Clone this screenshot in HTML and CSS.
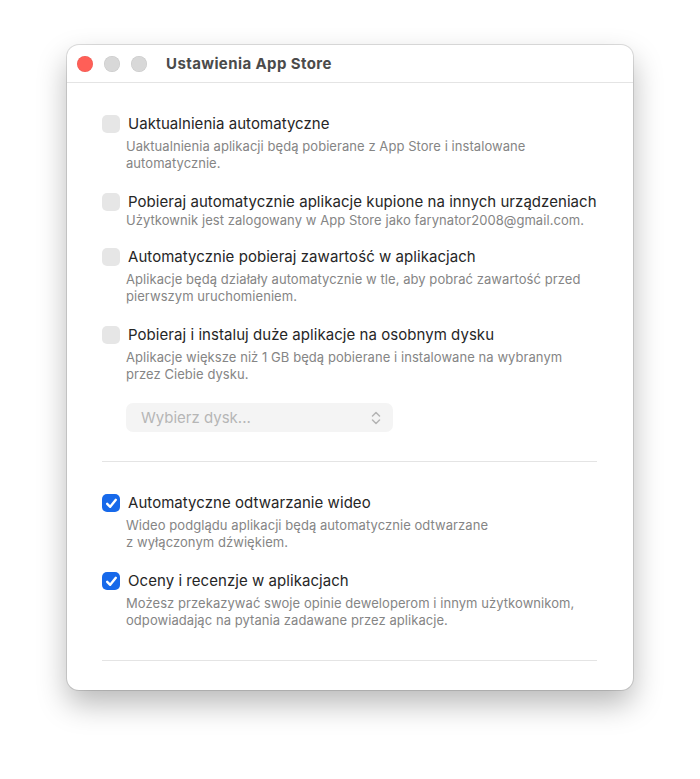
FILE: index.html
```html
<!DOCTYPE html>
<html lang="pl">
<head>
  <meta charset="UTF-8" />
  <title>Ustawienia App Store</title>
  <link rel="stylesheet" href="styles.css">
</head>
<body>

  <div class="window">
    <!-- Title bar -->
    <div class="titlebar">
      <div class="lights">
        <span class="light red"></span>
        <span class="light"></span>
        <span class="light"></span>
      </div>
      <div class="title">Ustawienia App Store</div>
    </div>

    <div class="content">
      <div class="group">
        <div class="option">
          <span class="box"></span>
          <div class="text">
            <div class="label">Uaktualnienia automatyczne</div>
            <div class="desc">Uaktualnienia aplikacji będą pobierane z App Store i instalowane<br>automatycznie.</div>
          </div>
        </div>

        <div class="option tight">
          <span class="box"></span>
          <div class="text">
            <div class="label">Pobieraj automatycznie aplikacje kupione na innych urządzeniach</div>
            <div class="desc">Użytkownik jest zalogowany w App Store jako farynator2008@gmail.com.</div>
          </div>
        </div>

        <div class="option">
          <span class="box"></span>
          <div class="text">
            <div class="label">Automatycznie pobieraj zawartość w aplikacjach</div>
            <div class="desc">Aplikacje będą działały automatycznie w tle, aby pobrać zawartość przed<br>pierwszym uruchomieniem.</div>
          </div>
        </div>

        <div class="option">
          <span class="box"></span>
          <div class="text">
            <div class="label">Pobieraj i instaluj duże aplikacje na osobnym dysku</div>
            <div class="desc">Aplikacje większe niż 1 GB będą pobierane i instalowane na wybranym<br>przez Ciebie dysku.</div>
            <div class="select">
              <span>Wybierz dysk...</span>
              <svg width="10" height="14" viewBox="0 0 10 14">
                <path d="M1.5 5 L5 1.5 L8.5 5 M1.5 9 L5 12.5 L8.5 9" fill="none" stroke="#b4b4b4" stroke-width="1.5" stroke-linecap="round" stroke-linejoin="round"/>
              </svg>
            </div>
          </div>
        </div>
      </div>

      <div class="divider"></div>

      <div class="group">
        <div class="option">
          <span class="box checked">
            <svg width="13" height="13" viewBox="0 0 12 12">
              <path d="M2 6.3 L4.8 9.1 L10 2.6" fill="none" stroke="#fff" stroke-width="2.2" stroke-linecap="round" stroke-linejoin="round"/>
            </svg>
          </span>
          <div class="text">
            <div class="label">Automatyczne odtwarzanie wideo</div>
            <div class="desc">Wideo podglądu aplikacji będą automatycznie odtwarzane<br>z wyłączonym dźwiękiem.</div>
          </div>
        </div>

        <div class="option">
          <span class="box checked">
            <svg width="13" height="13" viewBox="0 0 12 12">
              <path d="M2 6.3 L4.8 9.1 L10 2.6" fill="none" stroke="#fff" stroke-width="2.2" stroke-linecap="round" stroke-linejoin="round"/>
            </svg>
          </span>
          <div class="text">
            <div class="label">Oceny i recenzje w aplikacjach</div>
            <div class="desc">Możesz przekazywać swoje opinie deweloperom i innym użytkownikom,<br>odpowiadając na pytania zadawane przez aplikacje.</div>
          </div>
        </div>
      </div>

      <div class="divider last"></div>
    </div>
  </div>

</body>
</html>
```

FILE: styles.css
```css
:root {
  --label: #262626;
  --desc: #858585;
  --line: #e4e4e4;
  --blue: #1769ea;
  --box: #e6e6e6;
}

* {
  box-sizing: border-box;
}

body {
  margin: 0;
  padding: 45px 0 89px 67px;
  background: #fff;
  font-family: Inter, 'Noto Sans', sans-serif;
}

.window {
  width: 566px;
  height: 645px;
  background: #fff;
  border-radius: 12px;
  box-shadow: 0 0 0 1px rgba(0, 0, 0, 0.12), 0 14px 30px rgba(0, 0, 0, 0.28);
  overflow: hidden;
}

.titlebar {
  height: 38px;
  display: flex;
  align-items: center;
  padding-left: 10px;
  border-bottom: 1px solid var(--line);
}

.lights {
  display: flex;
  gap: 11px;
}

.light {
  width: 16px;
  height: 16px;
  border-radius: 50%;
  background: #d8d8d8;
  box-shadow: inset 0 0 0 0.5px rgba(0, 0, 0, 0.08);
}

.light.red {
  background: #ff5f57;
}

.title {
  margin-left: 19px;
  font-size: 15px;
  font-weight: 700;
  color: #4b4b4b;
  letter-spacing: 0.4px;
}

.content {
  padding: 31px 36px 0 35px;
}

.group {
  display: flex;
  flex-direction: column;
  gap: 20px;
}

.option {
  display: flex;
  gap: 6px;
}

.box {
  flex: none;
  width: 18px;
  height: 18px;
  margin-top: 1px;
  border-radius: 5px;
  background: var(--box);
  display: flex;
  align-items: center;
  justify-content: center;
}

.box.checked {
  background: var(--blue);
}

.label {
  padding-left: 2px;
  font-size: 15px;
  line-height: 20px;
  color: var(--label);
  letter-spacing: 0.05px;
  white-space: nowrap;
}

.desc {
  margin-top: 4px;
  font-size: 13px;
  line-height: 17px;
  color: var(--desc);
  letter-spacing: 0.06px;
  white-space: nowrap;
}

.tight {
  margin-bottom: -2px;
}

.tight .desc {
  margin-top: 0;
}

.select {
  margin-top: 20px;
  width: 267px;
  height: 29px;
  border-radius: 7px;
  background: #f4f4f4;
  display: flex;
  align-items: center;
  justify-content: space-between;
  padding: 0 12px 0 15px;
  font-size: 15px;
  color: #b6b6b6;
}

.divider {
  height: 1px;
  background: var(--line);
  margin: 29px 0 31px;
}

.divider.last {
  margin: 31px 0 0;
}
```
